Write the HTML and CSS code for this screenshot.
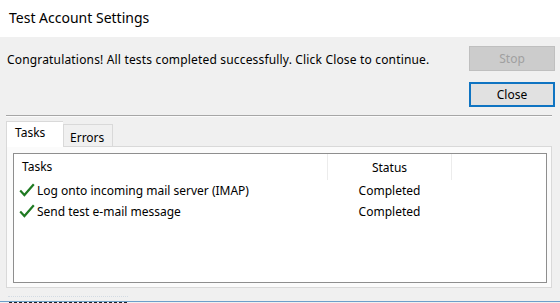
FILE: index.html
```html
<!DOCTYPE html>
<html>
<head>
<meta charset="utf-8">
<link rel="stylesheet" href="styles.css">
</head>
<body>
<div class="window">
  <div class="titlebar">Test Account Settings</div>
  <div class="top">
    <div class="message">Congratulations! All tests completed successfully. Click Close to continue.</div>
    <div class="buttons">
      <button class="btn btn-disabled">Stop</button>
      <button class="btn btn-default">Close</button>
    </div>
  </div>
  <div class="separator"></div>
  <div class="tabs">
    <div class="tab tab-active">Tasks</div>
    <div class="tab">Errors</div>
  </div>
  <div class="panel">
    <div class="listbox">
      <div class="row header">
        <div class="col col-task">Tasks</div>
        <div class="col col-status">Status</div>
        <div class="col col-rest"></div>
      </div>
      <div class="row">
        <div class="col col-task"><svg class="check" width="16" height="14" viewBox="0 0 16 14"><path d="M1.2 7.6 L5.4 12 L14.8 1.2" fill="none" stroke="#1f7a22" stroke-width="2.2"/></svg>Log onto incoming mail server (IMAP)</div>
        <div class="col col-status">Completed</div>
        <div class="col col-rest"></div>
      </div>
      <div class="row">
        <div class="col col-task"><svg class="check" width="16" height="14" viewBox="0 0 16 14"><path d="M1.2 7.6 L5.4 12 L14.8 1.2" fill="none" stroke="#1f7a22" stroke-width="2.2"/></svg>Send test e-mail message</div>
        <div class="col col-status">Completed</div>
        <div class="col col-rest"></div>
      </div>
    </div>
  </div>
  <div class="footer">
    <div class="footer-faint"></div>
    <div class="footer-line"></div>
    <div class="footer-dark"></div>
  </div>
</div>
</body>
</html>
```

FILE: styles.css
```css
* { box-sizing: border-box; }
html, body {
  margin: 0;
  padding: 0;
}
body {
  width: 560px;
  height: 303px;
  overflow: hidden;
  background: #f0f0f0;
  font-family: "Noto Sans", "Open Sans", sans-serif;
  font-size: 12px;
  color: #000;
}
.window {
  display: flex;
  flex-direction: column;
  height: 303px;
}
.titlebar {
  flex: none;
  height: 37px;
  background: #fff;
  padding: 8px 0 0 9px;
  font-size: 14px;
  line-height: 20px;
}
.top {
  flex: none;
  height: 78px;
  display: flex;
  justify-content: space-between;
  padding: 9px 5px 0 7px;
}
.message {
  padding-top: 5px;
  line-height: 18px;
  letter-spacing: 0.17px;
}
.buttons {
  display: flex;
  flex-direction: column;
  gap: 11px;
  width: 86px;
}
.btn {
  height: 25px;
  font-family: inherit;
  font-size: 12px;
  padding: 0;
  margin: 0;
}
.btn-disabled {
  background: #cccccc;
  border: 1px solid #bfbfbf;
  color: #a0a0a0;
}
.btn-default {
  background: #e1e1e1;
  border: 2px solid #0f74c2;
  color: #000;
}
.separator {
  flex: none;
  height: 2px;
  margin: 0 8px 0 6px;
  border-top: 1px solid #a6a6a6;
  border-bottom: 1px solid #fbfbfb;
}
.tabs {
  flex: none;
  display: flex;
  align-items: flex-end;
  padding: 4px 0 0 6px;
  height: 29px;
  position: relative;
  z-index: 1;
}
.tab {
  height: 22px;
  padding: 0 7px;
  border: 1px solid #d9d9d9;
  border-bottom: none;
  background: #f0f0f0;
  line-height: 21px;
}
.tab-active {
  height: 26px;
  width: 57px;
  padding-left: 8px;
  background: #fff;
  line-height: 22px;
  margin-bottom: -1px;
  border-right: none;
}
.tab + .tab {
  width: 50px;
  padding-left: 6px;
  padding-top: 2px;
}
.panel {
  flex: none;
  height: 142px;
  margin: 0 8px 0 6px;
  border: 1px solid #d9d9d9;
  background: #fbfbfb;
  padding: 6px 4px 4px 6px;
}
.listbox {
  height: 130px;
  background: #fff;
  border: 1px solid #8e8e8e;
}
.row {
  display: flex;
  height: 21px;
  line-height: 21px;
}
.row.header {
  height: 26px;
  line-height: 28px;
}
.col-task {
  width: 313px;
  padding-left: 8px;
  display: flex;
  align-items: center;
}
.row:not(.header) .col-task {
  padding-left: 4px;
}
.col-status {
  width: 125px;
  text-align: center;
}
.header .col-status {
  border-left: 1px solid #ececec;
  border-right: 1px solid #ececec;
}
.check {
  flex: none;
  margin-left: 1px;
  margin-right: 2px;
  margin-top: -2px;
}
.footer {
  flex: none;
  display: flex;
  flex-direction: column;
  padding-top: 8px;
}
.footer-faint {
  height: 1px;
  width: 120px;
  margin-left: 8px;
  border-top: 1px dotted #d3dbe3;
  margin-bottom: 4px;
}
.footer-line {
  height: 1px;
  background: #6d9fca;
}
.footer-dark {
  height: 1px;
  width: 118px;
  margin-left: 9px;
  border-top: 1px dashed #222;
}
```
